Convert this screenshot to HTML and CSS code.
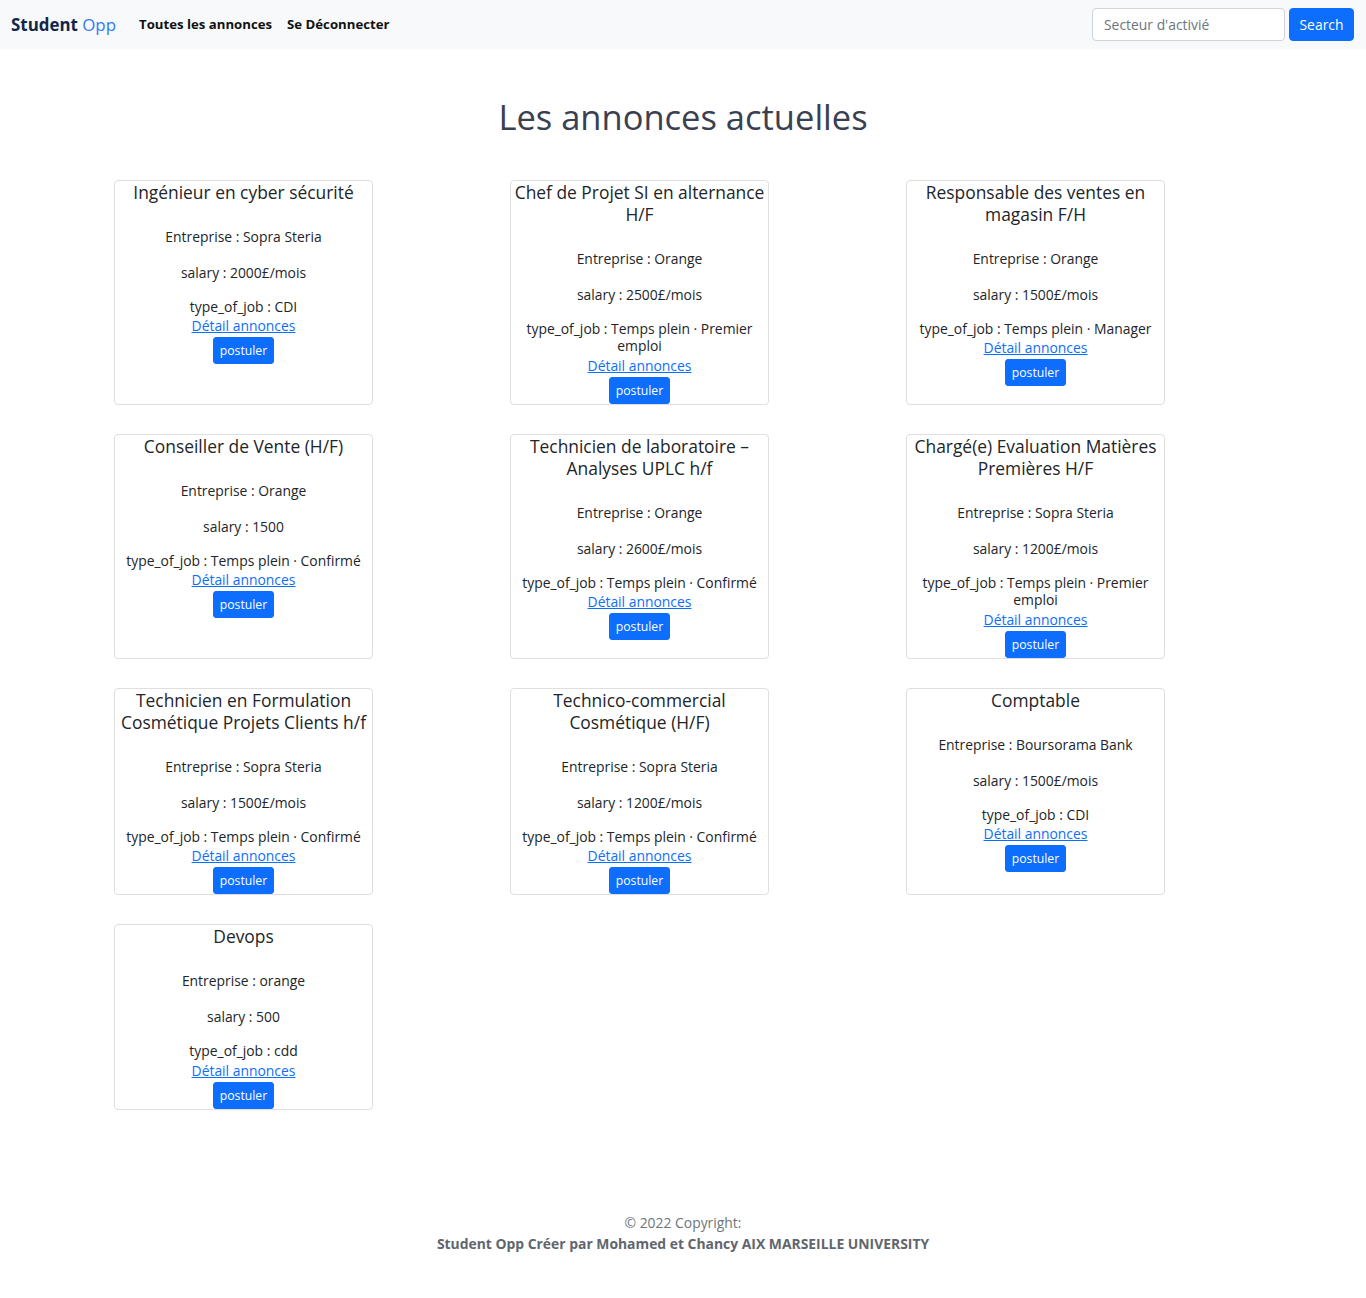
FILE: index.html
```html
<!DOCTYPE html>
<html lang="fr">
<head>
<meta charset="utf-8">
<title>Student Opp</title>
<link rel="stylesheet" href="styles.css">
</head>
<body>
<nav class="navbar">
  <a class="brand" href="#"><span class="brand-a">Student</span> <span class="brand-b">Opp</span></a>
  <a class="nav-link" href="#">Toutes les annonces</a>
  <a class="nav-link" href="#">Se Déconnecter</a>
  <form class="search">
    <input class="search-input" type="text" placeholder="Secteur d'activié">
    <button class="search-btn" type="button">Search</button>
  </form>
</nav>

<main class="main">
  <h1 class="page-title">Les annonces actuelles</h1>
  <div class="grid">
    <div class="card">
      <h5 class="card-title">Ingénieur en cyber sécurité</h5>
      <p class="field">Entreprise : Sopra Steria</p>
      <p class="field">salary : 2000£/mois</p>
      <p class="type">type_of_job : CDI</p>
      <a class="detail" href="#">Détail annonces</a>
      <button class="btn" type="button">postuler</button>
    </div>
    <div class="card">
      <h5 class="card-title">Chef de Projet SI en alternance H/F</h5>
      <p class="field">Entreprise : Orange</p>
      <p class="field">salary : 2500£/mois</p>
      <p class="type">type_of_job : Temps plein · Premier emploi</p>
      <a class="detail" href="#">Détail annonces</a>
      <button class="btn" type="button">postuler</button>
    </div>
    <div class="card">
      <h5 class="card-title">Responsable des ventes en magasin F/H</h5>
      <p class="field">Entreprise : Orange</p>
      <p class="field">salary : 1500£/mois</p>
      <p class="type">type_of_job : Temps plein · Manager</p>
      <a class="detail" href="#">Détail annonces</a>
      <button class="btn" type="button">postuler</button>
    </div>
    <div class="card">
      <h5 class="card-title">Conseiller de Vente (H/F)</h5>
      <p class="field">Entreprise : Orange</p>
      <p class="field">salary : 1500</p>
      <p class="type">type_of_job : Temps plein · Confirmé</p>
      <a class="detail" href="#">Détail annonces</a>
      <button class="btn" type="button">postuler</button>
    </div>
    <div class="card">
      <h5 class="card-title">Technicien de laboratoire – Analyses UPLC h/f</h5>
      <p class="field">Entreprise : Orange</p>
      <p class="field">salary : 2600£/mois</p>
      <p class="type">type_of_job : Temps plein · Confirmé</p>
      <a class="detail" href="#">Détail annonces</a>
      <button class="btn" type="button">postuler</button>
    </div>
    <div class="card">
      <h5 class="card-title">Chargé(e) Evaluation Matières Premières H/F</h5>
      <p class="field">Entreprise : Sopra Steria</p>
      <p class="field">salary : 1200£/mois</p>
      <p class="type">type_of_job : Temps plein · Premier emploi</p>
      <a class="detail" href="#">Détail annonces</a>
      <button class="btn" type="button">postuler</button>
    </div>
    <div class="card">
      <h5 class="card-title">Technicien en Formulation Cosmétique Projets Clients h/f</h5>
      <p class="field">Entreprise : Sopra Steria</p>
      <p class="field">salary : 1500£/mois</p>
      <p class="type">type_of_job : Temps plein · Confirmé</p>
      <a class="detail" href="#">Détail annonces</a>
      <button class="btn" type="button">postuler</button>
    </div>
    <div class="card">
      <h5 class="card-title">Technico-commercial Cosmétique (H/F)</h5>
      <p class="field">Entreprise : Sopra Steria</p>
      <p class="field">salary : 1200£/mois</p>
      <p class="type">type_of_job : Temps plein · Confirmé</p>
      <a class="detail" href="#">Détail annonces</a>
      <button class="btn" type="button">postuler</button>
    </div>
    <div class="card">
      <h5 class="card-title">Comptable</h5>
      <p class="field">Entreprise : Boursorama Bank</p>
      <p class="field">salary : 1500£/mois</p>
      <p class="type">type_of_job : CDI</p>
      <a class="detail" href="#">Détail annonces</a>
      <button class="btn" type="button">postuler</button>
    </div>
    <div class="card">
      <h5 class="card-title">Devops</h5>
      <p class="field">Entreprise : orange</p>
      <p class="field">salary : 500</p>
      <p class="type">type_of_job : cdd</p>
      <a class="detail" href="#">Détail annonces</a>
      <button class="btn" type="button">postuler</button>
    </div>
  </div>
</main>

<footer class="footer">
  <div class="copy">© 2022 Copyright:</div>
  <div class="credit">Student Opp Créer par Mohamed et Chancy AIX MARSEILLE UNIVERSITY</div>
</footer>
</body>
</html>
```

FILE: styles.css
```css
* { box-sizing: border-box; }

body {
  margin: 0;
  font-family: "Open Sans", "Noto Sans", sans-serif;
  font-size: 13.9px;
  line-height: 1.5;
  color: #212529;
  background: #fff;
}

.navbar {
  height: 49px;
  background: #f8f9fa;
  display: flex;
  align-items: center;
  padding: 0 12px 0 11px;
}

.brand {
  text-decoration: none;
  font-size: 16.9px;
  margin-right: 23px;
  white-space: nowrap;
}
.brand-a { font-weight: 700; color: #13254a; }
.brand-b { font-weight: 400; color: #2f7bf5; }

.nav-link {
  color: #111;
  font-weight: 700;
  text-decoration: none;
  font-size: 13.2px;
  margin-right: 15px;
  white-space: nowrap;
}

.search {
  margin-left: auto;
  display: flex;
  align-items: center;
  gap: 4px;
}

.search-input {
  width: 193px;
  height: 33px;
  border: 1px solid #ced4da;
  border-radius: 4px;
  padding: 0 11px;
  font-family: inherit;
  font-size: 13.9px;
  color: #212529;
  background: #fff;
}
.search-input::placeholder { color: #6c757d; }

.search-btn {
  width: 65px;
  height: 33px;
  border: 1px solid #0d6efd;
  border-radius: 4px;
  background: #0d6efd;
  color: #fff;
  font-family: inherit;
  font-size: 13.9px;
  padding: 0;
}

.main {
  width: 1188px;
  margin: 0 auto;
}

.page-title {
  text-align: center;
  font-size: 34.5px;
  font-weight: 500;
  line-height: 42px;
  color: #3a4050;
  margin: 47px 0 42px;
}

.grid {
  display: grid;
  grid-template-columns: repeat(3, 396px);
  row-gap: 29px;
}

.card {
  width: 259px;
  margin-left: 25px;
  border: 1px solid #dfdfdf;
  border-radius: 4px;
  text-align: center;
  display: flex;
  flex-direction: column;
  align-items: center;
  padding: 0 1px;
}

.card-title {
  font-size: 17.4px;
  font-weight: 500;
  line-height: 22px;
  margin: 0 0 23px;
  color: #212529;
}

.field {
  margin: 0 0 14.4px;
  line-height: 21.6px;
}

.type {
  margin: 0;
  line-height: 17.5px;
}

.detail {
  display: block;
  line-height: 21px;
  color: #0d6efd;
  text-decoration: underline;
}

.btn {
  margin-top: 1px;
  height: 27px;
  padding: 0 6px;
  border: 1px solid #0d6efd;
  border-radius: 3px;
  background: #0d6efd;
  color: #fff;
  font-family: inherit;
  font-size: 12.2px;
}

.footer {
  margin-top: 102px;
  padding-bottom: 40px;
  text-align: center;
  line-height: 21px;
  color: #6c757d;
}
.credit { font-weight: 700; color: #5f666e; }
```
